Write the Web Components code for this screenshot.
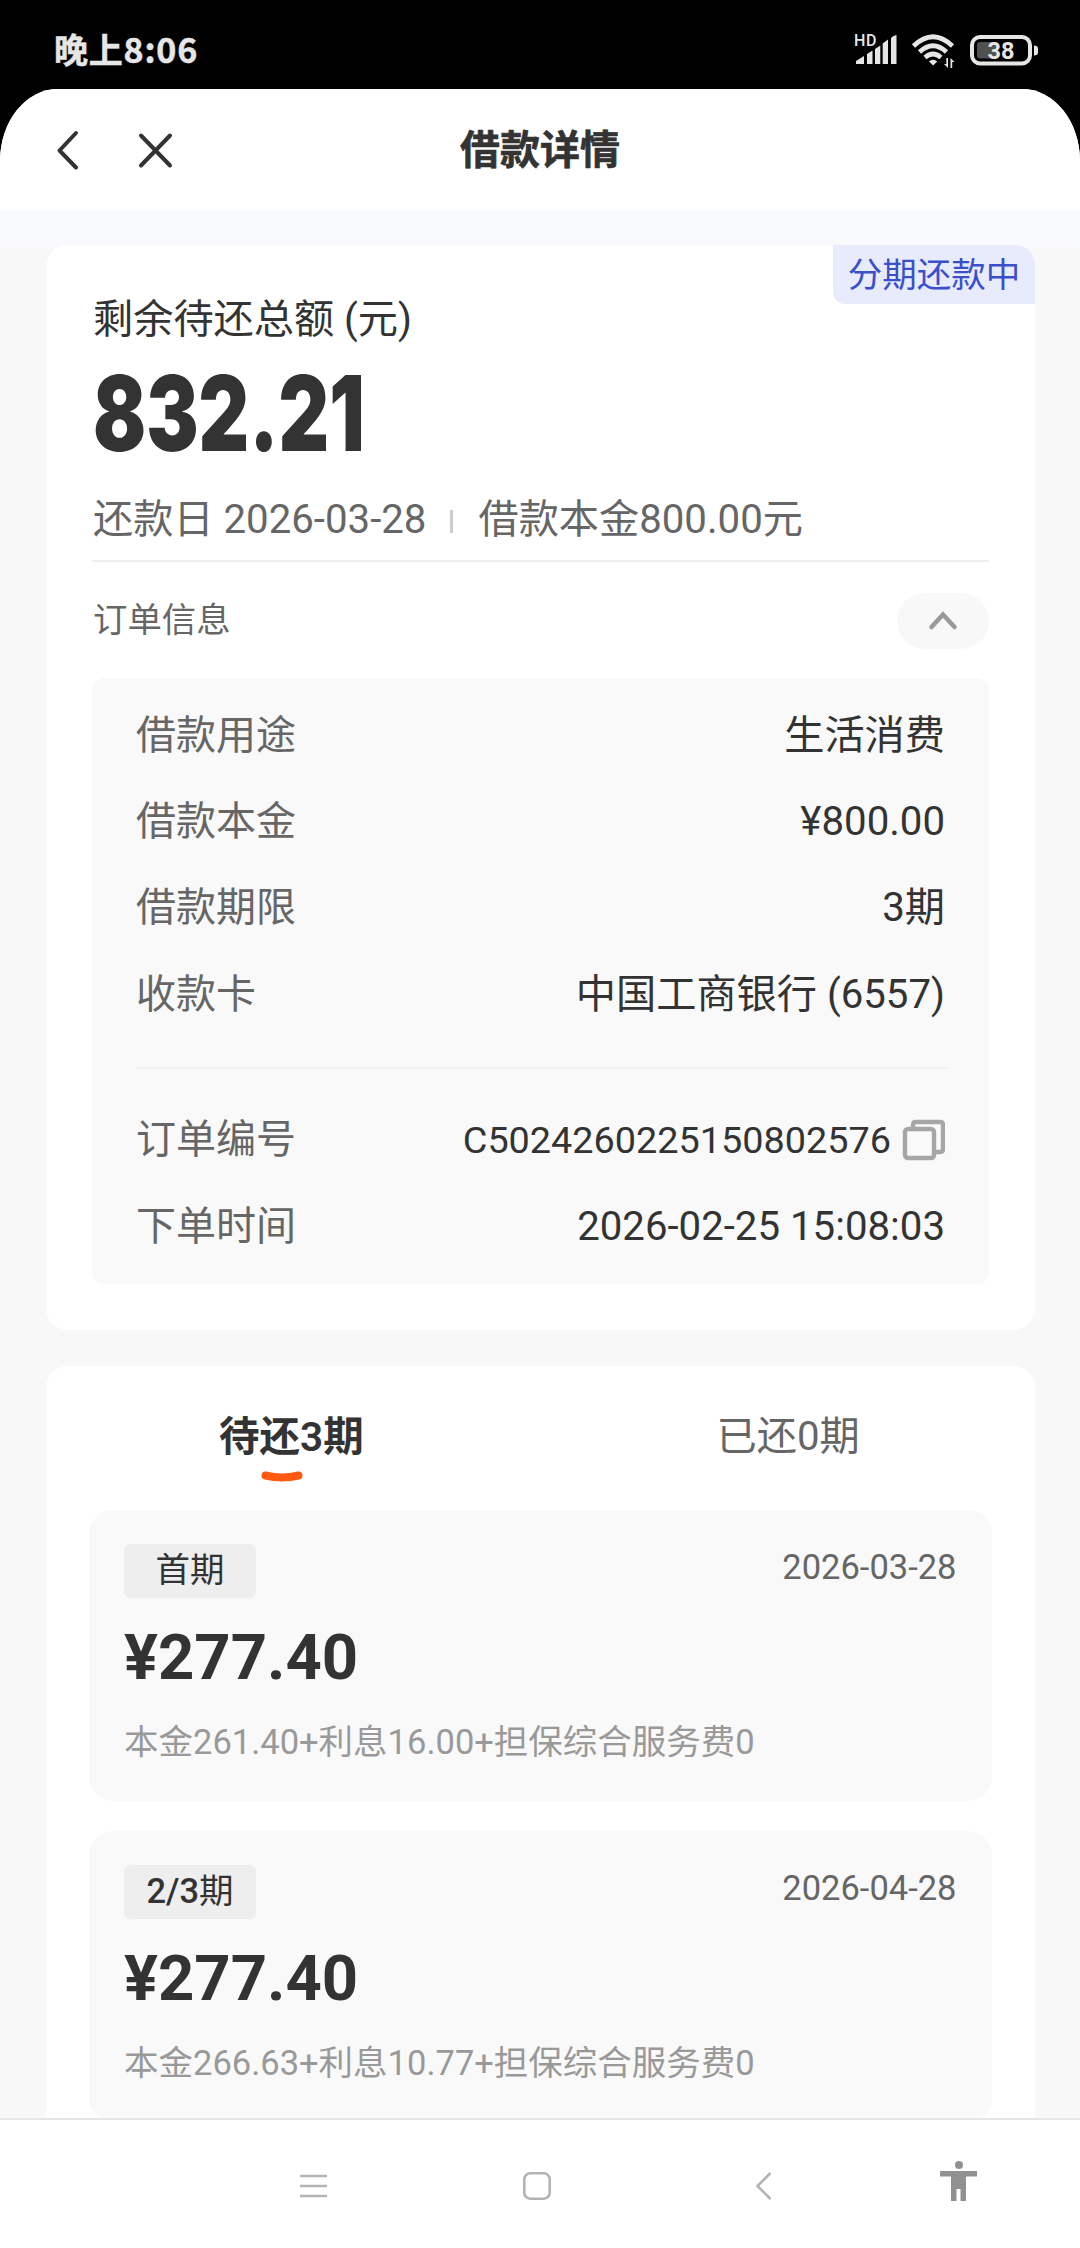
<!DOCTYPE html>
<html lang="zh-CN">
<head>
<meta charset="utf-8">
<title>借款详情</title>
<style>
html,body{margin:0;padding:0;background:#fff}
body{font-family:Roboto,"Noto Sans CJK SC",sans-serif;font-size:40.2px;color:#333;width:1080px;height:2248px;overflow:hidden}
</style>
</head>
<body>
<phone-screen>
  <status-bar slot="status" battery="38">晚上8:06</status-bar>
  <title-bar slot="header">借款详情</title-bar>
  <loan-summary amount="832.21" state="分期还款中">
    <span slot="label">剩余待还总额 (元)</span>
    <span slot="due">还款日 2026-03-28</span>
    <span slot="principal">借款本金800.00元</span>
    <order-info heading="订单信息">
      <info-row label="借款用途">生活消费</info-row>
      <info-row label="借款本金">¥800.00</info-row>
      <info-row label="借款期限">3期</info-row>
      <info-row label="收款卡">中国工商银行 (6557)</info-row>
      <info-row slot="order" label="订单编号" copy>C5024260225150802576</info-row>
      <info-row slot="order" label="下单时间">2026-02-25 15:08:03</info-row>
    </order-info>
  </loan-summary>
  <repay-plan>
    <plan-tab slot="tabs" active>待还3期</plan-tab>
    <plan-tab slot="tabs">已还0期</plan-tab>
    <plan-item term="首期" date="2026-03-28" amount="¥277.40">本金261.40+利息16.00+担保综合服务费0</plan-item>
    <plan-item term="2/3期" date="2026-04-28" amount="¥277.40">本金266.63+利息10.77+担保综合服务费0</plan-item>
  </repay-plan>
  <nav-bar slot="nav"></nav-bar>
</phone-screen>
<script>
const define = (name, render) => customElements.define(name, class extends HTMLElement {
  constructor() {
    super();
    this.attachShadow({ mode: 'open' });
  }
  connectedCallback() {
    this.shadowRoot.innerHTML = render(this);
  }
});
const attr = (el, name) => el.getAttribute(name) || '';

define('phone-screen', () => `
<style>
:host{display:flex;flex-direction:column;width:1080px;height:2248px;background:#000;overflow:hidden}
.app{flex:1;min-height:0;display:flex;flex-direction:column;background:#f8f8f8;border-radius:58px 58px 0 0/72px 72px 0 0;overflow:hidden}
main{flex:1;min-height:0;overflow:hidden;display:flex;flex-direction:column;gap:36px;padding:35px 45px 0 46px;background:linear-gradient(#f9fafe 0 32px,#f8f8f8 44px)}
</style>
<slot name="status"></slot>
<div class="app"><slot name="header"></slot><main><slot></slot></main><slot name="nav"></slot></div>`);

define('status-bar', el => `
<style>
:host{display:flex;align-items:center;height:89px;box-sizing:border-box;padding:10px 42px 0 54px;color:#e6e6e6}
.time{flex:1;font:700 34px/44px "Noto Sans CJK SC",sans-serif;letter-spacing:.800px;-webkit-text-stroke:.5px #e6e6e6;margin-top:-1px}
svg{display:block}
text{font-family:Roboto,sans-serif;font-weight:700;fill:#e6e6e6}
text.hd{font-weight:500}
</style>
<span class="time"><slot></slot></span>
<svg width="184" height="40" viewBox="854 30 184 40" fill="#e6e6e6">
<text class="hd" x="854" y="45.500" font-size="16" letter-spacing=".6">HD</text>
<path d="M856 64v-3l8-5v8zM867 64V54l5.500-3.500V64zM875 64V49l5.300-3.500V64zM882.700 64V43.500l5.300-4V64zM891 64V38q2-2.500 5.500-3V64z"/>
<g fill="none" stroke="#e6e6e6" stroke-width="4.600">
<path d="M913.500 46Q933 27.500 952.500 46M919.500 52Q933 39.500 946.500 52M925 57.500Q933 50.500 941 57.500"/></g>
<path d="M929 61.500a5.600 5.600 0 0 1 8.200 0l-4.100 4z"/>
<path d="M948 58v10l-4-4h2.300v-6zM950.500 68V58l4 4h-2.300v6z"/>
<rect x="972" y="37" width="58" height="26.500" rx="8" fill="none" stroke="#e6e6e6" stroke-width="4"/>
<rect x="977" y="42" width="20" height="16.500" rx="3" fill="#505050"/>
<path d="M1034 45.500q4 0 4 3v4q0 3-4 3z"/>
<text x="987.500" y="59" font-size="23.500">${attr(el, 'battery')}</text>
</svg>`);

define('title-bar', () => `
<style>
:host{display:grid;grid-template-columns:1fr auto 1fr;align-items:center;height:121px;background:#fff}
.actions{display:flex;gap:56px;padding-left:55px}
h1{margin:3px 0 0;font-size:40px;line-height:56px;font-weight:700;color:#333;-webkit-text-stroke:.6px #333}
svg{display:block;fill:none;stroke:#333;stroke-width:4;stroke-linecap:round;stroke-linejoin:round}
</style>
<div class="actions">
<svg width="26" height="42" viewBox="0 0 26 42"><path d="M21 4 4.500 21.500 21 38.500"/></svg>
<svg width="38" height="42" viewBox="0 0 38 42"><path d="M4 6.500 33 36.500M33 6.500 4 36.500"/></svg>
</div>
<h1><slot></slot></h1>`);

define('loan-summary', el => `
<style>
:host{display:block;position:relative;box-sizing:border-box;height:1084.500px;flex:none;background:#fff;border-radius:22px;padding:45px 46px 0}
.state{position:absolute;right:0;top:0;width:202px;height:59px;box-sizing:border-box;background:#e8ebfb;color:#3a50cb;border-radius:0 20px 0 12px;font-size:34.500px;line-height:61px;text-align:center}
.label{line-height:60px;padding-left:1px}
.amount{height:104px;line-height:104px;margin-top:11px;font-family:Inter,Roboto,sans-serif;font-size:104.500px;font-weight:700;padding-left:1px}
.amount b{display:inline-block;transform:scaleX(.75);transform-origin:0 50%}
.meta{display:flex;align-items:center;margin-top:24px;line-height:60px;color:#666;padding-left:1px;height:62px;padding-bottom:9px;border-bottom:2px solid #efefef}
.bar{width:3px;height:23px;background:#ccc;margin:2px 25px 0 24px}
</style>
<div class="state">${attr(el, 'state')}</div>
<div class="label"><slot name="label"></slot></div>
<div class="amount"><b>${attr(el, 'amount')}</b></div>
<div class="meta"><slot name="due"></slot><i class="bar"></i><slot name="principal"></slot></div>
<slot></slot>`);

define('order-info', el => `
<style>
:host{display:block;width:897px}
.head{display:flex;justify-content:space-between;align-items:center;height:56px;margin-top:31px;font-size:34.400px;color:#666;padding-left:1px}
.head span:first-child{margin-bottom:9px}
.pill{width:92px;height:56px;border-radius:28px;background:#f8f8f8;display:flex;align-items:center;justify-content:center}
.box{margin-top:29px;height:606px;box-sizing:border-box;background:#f9f9f9;border-radius:12px;padding:14.500px 44px 0}
hr{border:0;height:2px;background:#f0f0f0;margin:29px -2px 28.500px 0}
</style>
<div class="head"><span>${attr(el, 'heading')}</span><span class="pill"><svg width="32" height="22" viewBox="0 0 32 22" fill="none" stroke="#999" stroke-width="4.500" stroke-linecap="round"><path d="M4.500 17 16 4.500 27.500 17"/></svg></span></div>
<div class="box"><slot></slot><hr><slot name="order"></slot></div>`);

define('info-row', el => `
<style>
:host{display:flex;justify-content:space-between;align-items:center;height:86.300px;line-height:60px;color:#333}
.k{color:#666;font-size:40px}
.v{display:flex;align-items:center;gap:11px}
:host([copy]) .v{font-size:37.800px;margin-top:-1px}
svg{display:block}
</style>
<span class="k">${attr(el, 'label')}</span>
<span class="v"><span><slot></slot></span>${el.hasAttribute('copy') ? '<svg width="43" height="42" viewBox="0 0 43 42" fill="none" stroke="#a6a6a6" stroke-width="4.400"><rect x="3" y="10" width="29" height="29" rx="3"/><path d="M11 9V6q0-3 3-3h24q3 0 3 3v24q0 3-3 3h-5"/></svg>' : ''}</span>`);

define('repay-plan', () => `
<style>
:host{display:block;box-sizing:border-box;height:900px;flex:none;background:#fff;border-radius:22px;padding:0 43.500px 0 43px}
.tabs{display:flex;height:144px;margin:0 -45px 0 -46px}
.list{display:flex;flex-direction:column;gap:29.500px}
</style>
<div class="tabs"><slot name="tabs"></slot></div>
<div class="list"><slot></slot></div>`);

define('plan-tab', el => `
<style>
:host{flex:1;display:flex;flex-direction:column;align-items:center;padding-top:41px;color:#666;line-height:60px}
:host([active]) .t{font-weight:600;color:#333;font-size:40.500px}
svg{display:block;margin:2px 19px 0 0}
</style>
<span class="t"><slot></slot></span>${el.hasAttribute('active') ? '<svg width="44" height="16" viewBox="0 0 44 16" fill="none" stroke="#ff5a10" stroke-width="8" stroke-linecap="round"><path d="M5.500 6.500Q22 10.500 38.500 6.500"/></svg>' : ''}`);

define('plan-item', el => `
<style>
:host{display:block;box-sizing:border-box;height:291.500px;background:#f9f9f9;border-radius:24px;padding:34.500px 35px 0 35px;font-size:34.500px}
.top{display:flex;justify-content:space-between;align-items:flex-start}
.term{width:132px;height:54px;line-height:53px;text-align:center;background:#eee;border-radius:6px;font-weight:400}
.term b{font-weight:500}
.date{line-height:46px;color:#666}
.amount{font-size:63.400px;font-weight:700;line-height:76px;margin-top:21px}
.detail{line-height:50px;margin-top:22px;color:#999}
</style>
<div class="top"><span class="term">${attr(el, 'term').replace(/[\d/]+/, '<b>$&</b>')}</span><span class="date">${attr(el, 'date')}</span></div>
<div class="amount">${attr(el, 'amount')}</div>
<div class="detail"><slot></slot></div>`);

define('nav-bar', () => `
<style>
:host{display:flex;align-items:center;height:130px;box-sizing:border-box;border-top:2px solid #e6e6e6;background:#fff;padding:4px 100px 0 298px}
svg{display:block;fill:none;stroke:#b3b3b3;stroke-width:2.600}
.home{margin-left:192px}.back{margin-left:201px}.a11y{margin-left:165px;margin-top:-10px;fill:#919191;stroke:none}
</style>
<svg width="31" height="32" viewBox="0 0 31 32"><path d="M2 6h27M2 16h27M2 26h27"/></svg>
<svg class="home" width="32" height="32" viewBox="0 0 32 32"><rect x="3.300" y="3.300" width="25.400" height="25.400" rx="6"/></svg>
<svg class="back" width="20" height="32" viewBox="0 0 20 32"><path d="M16.500 3 3.500 16 16.500 29"/></svg>
<svg class="a11y" width="40" height="42" viewBox="0 0 40 42"><circle cx="20" cy="5" r="4"/><path d="M1 11h37v5.500H27V41h-5.500V29h-4v12H12V16.500H1z"/></svg>`);
</script>
</body>
</html>
